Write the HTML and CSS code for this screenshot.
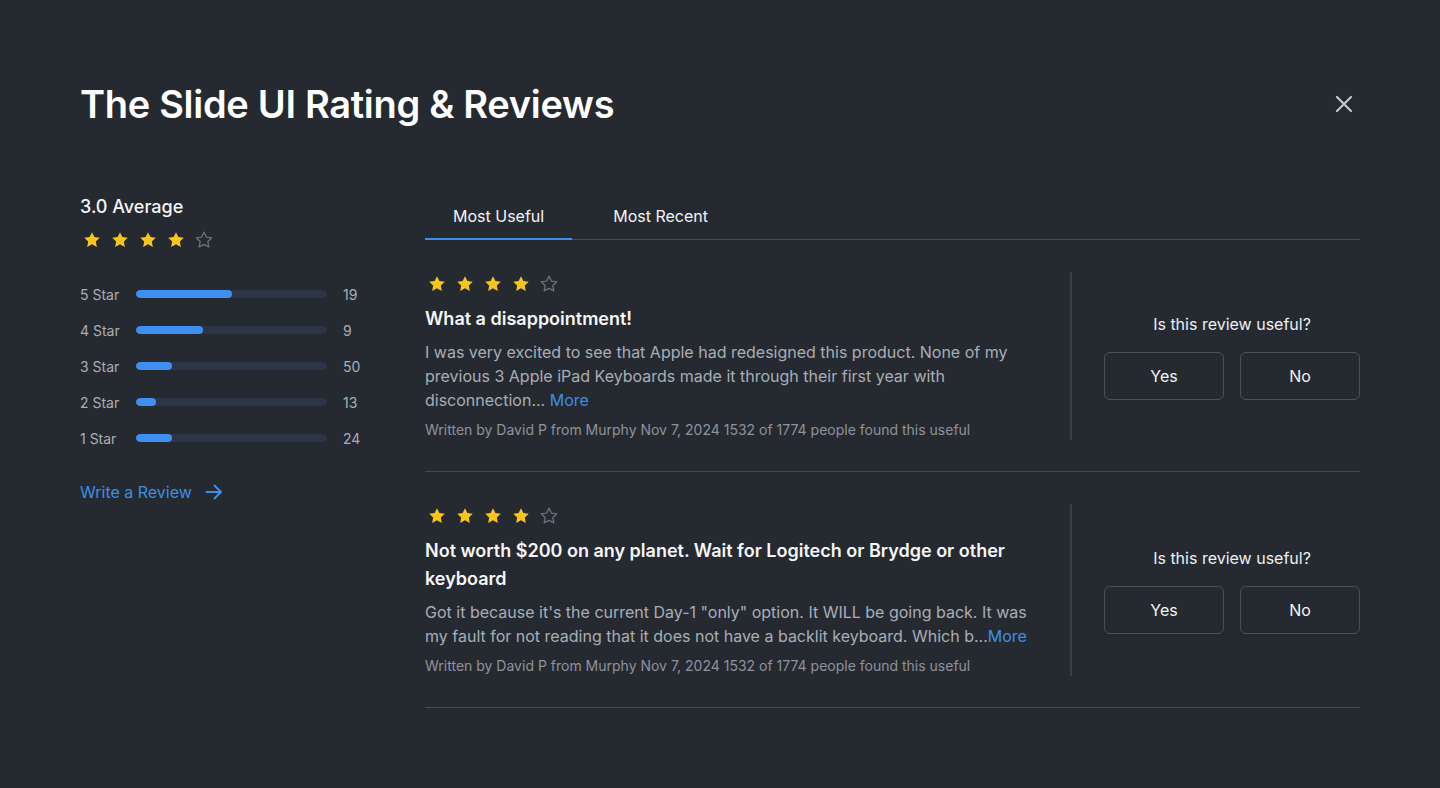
FILE: index.html
```html
<!DOCTYPE html>
<html lang="en">
<head>
<meta charset="utf-8">
<title>The Slide UI Rating &amp; Reviews</title>
<link rel="stylesheet" href="styles.css">
</head>
<body>
<svg width="0" height="0" class="defs" aria-hidden="true">
  <defs>
    <path id="star" d="M12 2.6l2.85 5.9 6.45.9-4.7 4.5 1.15 6.4L12 17.2l-5.75 3.1 1.15-6.4-4.7-4.5 6.45-.9z"/>
  </defs>
</svg>
<div class="page">
  <header class="header">
    <h1 class="title">The Slide UI Rating &amp; Reviews</h1>
    <button class="close" aria-label="Close">
      <svg width="18" height="18" viewBox="0 0 18 18"><path d="M2 2L16 16M16 2L2 16" stroke="#c3c7cd" stroke-width="2.2" stroke-linecap="round"/></svg>
    </button>
  </header>

  <main class="main">
    <aside class="summary">
      <div class="avg">3.0 Average</div>
      <div class="stars stars-lg">
        <svg viewBox="0 0 24 24" class="star on"><use href="#star"/></svg>
        <svg viewBox="0 0 24 24" class="star on"><use href="#star"/></svg>
        <svg viewBox="0 0 24 24" class="star on"><use href="#star"/></svg>
        <svg viewBox="0 0 24 24" class="star on"><use href="#star"/></svg>
        <svg viewBox="0 0 24 24" class="star off"><use href="#star"/></svg>
      </div>
      <div class="bars">
        <div class="bar-row"><span class="bar-label">5 Star</span><span class="track"><span class="fill" style="width:50%"></span></span><span class="count">19</span></div>
        <div class="bar-row"><span class="bar-label">4 Star</span><span class="track"><span class="fill" style="width:35%"></span></span><span class="count">9</span></div>
        <div class="bar-row"><span class="bar-label">3 Star</span><span class="track"><span class="fill" style="width:19%"></span></span><span class="count">50</span></div>
        <div class="bar-row"><span class="bar-label">2 Star</span><span class="track"><span class="fill" style="width:10.5%"></span></span><span class="count">13</span></div>
        <div class="bar-row"><span class="bar-label">1 Star</span><span class="track"><span class="fill" style="width:19%"></span></span><span class="count">24</span></div>
      </div>
      <a class="write" href="#">Write a Review
        <svg width="18" height="16" viewBox="0 0 18 16"><path d="M1.5 8H16M9.5 1.5L16 8l-6.5 6.5" fill="none" stroke="#3e8ee8" stroke-width="2" stroke-linecap="round" stroke-linejoin="round"/></svg>
      </a>
    </aside>

    <section class="reviews">
      <nav class="tabs">
        <a class="tab active" href="#">Most Useful</a>
        <a class="tab" href="#">Most Recent</a>
      </nav>

      <article class="review">
        <div class="review-main">
          <div class="stars stars-sm">
            <svg viewBox="0 0 24 24" class="star on"><use href="#star"/></svg>
            <svg viewBox="0 0 24 24" class="star on"><use href="#star"/></svg>
            <svg viewBox="0 0 24 24" class="star on"><use href="#star"/></svg>
            <svg viewBox="0 0 24 24" class="star on"><use href="#star"/></svg>
            <svg viewBox="0 0 24 24" class="star off"><use href="#star"/></svg>
          </div>
          <h2 class="review-title">What a disappointment!</h2>
          <p class="review-body">I was very excited to see that Apple had redesigned this product. None of my previous 3 Apple iPad Keyboards made it through their first year with disconnection... <a class="more" href="#">More</a></p>
          <p class="meta">Written by David P from Murphy Nov 7, 2024 1532 of 1774 people found this useful</p>
        </div>
        <div class="review-side">
          <p class="question">Is this review useful?</p>
          <div class="buttons">
            <button class="btn">Yes</button>
            <button class="btn">No</button>
          </div>
        </div>
      </article>

      <article class="review">
        <div class="review-main">
          <div class="stars stars-sm">
            <svg viewBox="0 0 24 24" class="star on"><use href="#star"/></svg>
            <svg viewBox="0 0 24 24" class="star on"><use href="#star"/></svg>
            <svg viewBox="0 0 24 24" class="star on"><use href="#star"/></svg>
            <svg viewBox="0 0 24 24" class="star on"><use href="#star"/></svg>
            <svg viewBox="0 0 24 24" class="star off"><use href="#star"/></svg>
          </div>
          <h2 class="review-title">Not worth $200 on any planet. Wait for Logitech or Brydge or other keyboard</h2>
          <p class="review-body">Got it because it's the current Day-1 "only" option. It WILL be going back. It was my fault for not reading that it does not have a backlit keyboard. Which b...<a class="more" href="#">More</a></p>
          <p class="meta">Written by David P from Murphy Nov 7, 2024 1532 of 1774 people found this useful</p>
        </div>
        <div class="review-side">
          <p class="question">Is this review useful?</p>
          <div class="buttons">
            <button class="btn">Yes</button>
            <button class="btn">No</button>
          </div>
        </div>
      </article>
    </section>
  </main>
</div>
</body>
</html>
```

FILE: styles.css
```css
* { box-sizing: border-box; }
html, body {
  margin: 0;
  padding: 0;
  background: #252a31;
  font-family: Inter, "Noto Sans", "Liberation Sans", sans-serif;
  color: #f3f4f6;
}
.defs { position: absolute; }
.page {
  width: 1440px;
  height: 788px;
  padding: 80px 80px 0 80px;
}
.header {
  display: flex;
  align-items: center;
  justify-content: space-between;
  height: 48px;
}
.title {
  margin: 0;
  font-size: 38px;
  line-height: 48px;
  font-weight: 600;
  letter-spacing: -0.3px;
  color: #ffffff;
}
.close {
  background: none;
  border: 0;
  padding: 0;
  width: 18px;
  height: 18px;
  margin-right: 7px;
  display: flex;
  cursor: pointer;
}
.main {
  display: grid;
  grid-template-columns: 280px 1fr;
  column-gap: 65px;
  margin-top: 65px;
}
.avg {
  font-size: 18px;
  line-height: 28px;
  font-weight: 500;
  color: #f5f6f7;
}
.stars { display: flex; align-items: center; }
.stars-lg { gap: 8px; margin-top: 9px; height: 20px; margin-left: 2px; }
.stars-lg .star { width: 20px; height: 20px; }
.stars-sm { gap: 8px; height: 24px; margin-left: 2px; }
.stars-sm .star { width: 20px; height: 20px; }
.star.on { fill: #f8c51c; }
.star.off { fill: none; stroke: #6b717b; stroke-width: 1.6; stroke-linejoin: round; }

.bars {
  display: flex;
  flex-direction: column;
  gap: 16px;
  margin-top: 34px;
}
.bar-row {
  display: flex;
  align-items: center;
  height: 20px;
  font-size: 14px;
  color: #a9aeb6;
}
.bar-label { width: 56px; }
.track {
  flex: 1;
  height: 8px;
  border-radius: 4px;
  background: #2c3545;
  position: relative;
  overflow: hidden;
}
.fill {
  display: block;
  height: 100%;
  border-radius: 4px;
  background: #3e8ff0;
}
.count { width: 17px; margin-left: 16px; white-space: nowrap; }

.write {
  display: inline-flex;
  align-items: center;
  gap: 13px;
  margin-top: 32px;
  font-size: 16px;
  line-height: 24px;
  color: #3e8ee8;
  text-decoration: none;
}

.tabs {
  display: flex;
  border-bottom: 1px solid #4a4f57;
}
.tab {
  font-size: 16px;
  line-height: 24px;
  font-weight: 400;
  color: #f3f4f6;
  text-decoration: none;
  padding: 11px 28px 10px;
  border-bottom: 2px solid transparent;
  margin-bottom: -1px;
}
.tab + .tab { margin-left: 13px; }
.tab.active { border-bottom-color: #3e8ee8; }

.review {
  display: flex;
  padding: 32px 0 31px;
  border-bottom: 1px solid #444a52;
}
.review-main {
  flex: 1;
  padding-right: 32px;
  border-right: 2px solid #3a3f47;
}
.review-title {
  margin: 9px 0 0;
  font-size: 18px;
  line-height: 28px;
  font-weight: 600;
  color: #f5f6f7;
}
.review-body {
  margin: 7px 0 0;
  font-size: 16px;
  line-height: 24px;
  color: #a9aeb6;
}
.more { color: #3e8ee8; text-decoration: none; }
.meta {
  margin: 8px 0 0;
  font-size: 14px;
  line-height: 20px;
  color: #8e939b;
}
.review-side {
  width: 288px;
  padding: 2px 0 0 32px;
  display: flex;
  flex-direction: column;
  justify-content: center;
  align-items: center;
}
.question {
  margin: 0 0 18px;
  font-size: 16px;
  line-height: 20px;
  font-weight: 400;
  color: #eef0f2;
}
.buttons { display: flex; gap: 16px; }
.btn {
  width: 120px;
  height: 48px;
  background: transparent;
  border: 1px solid #4b5058;
  border-radius: 6px;
  color: #f3f4f6;
  font-family: inherit;
  font-size: 16px;
  font-weight: 400;
}
```
